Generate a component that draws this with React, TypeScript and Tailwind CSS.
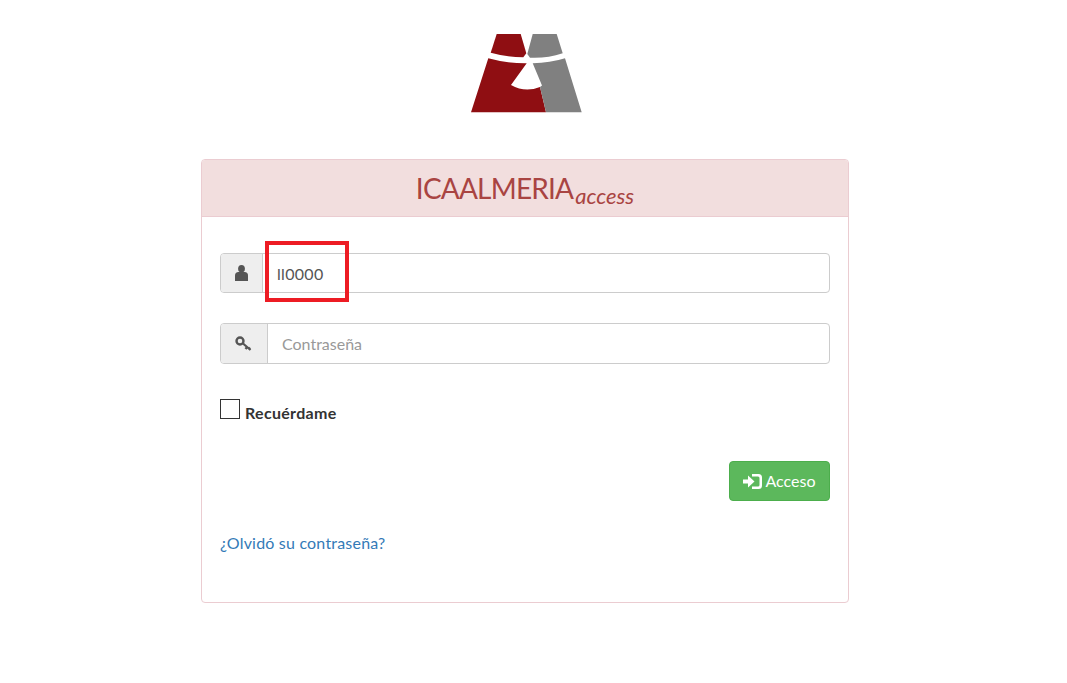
export default function App() {
  return (
    <div className="min-h-screen bg-white font-['Lato','Noto_Sans',sans-serif]">
      <div className="w-[1050px] relative">
        <div className="pt-[28px] pl-[465px]">
          <svg className="block w-[125px] h-[90px]" viewBox="465 28 125 90">
            <path d="M496.7 34H520.7L526.3 53.3L523.3 57.3Q506 57 490.7 52.7Z" fill="#8f0e12" />
            <path d="M532.7 34H556.7L562.7 53.3Q547 58.5 530 57.7L527.3 54Z" fill="#808080" />
            <path d="M488.3 58.3Q507 63.5 526.7 63.3L511 85Q525 93 540 87L546 112.3H471Z" fill="#8f0e12" />
            <path d="M565 58.3L581.7 112.3H546L540 87L542 85.5L532.7 63.3Q550 63 565 58.3Z" fill="#808080" />
          </svg>
        </div>

        <div className="ml-[201px] mt-[41px] w-[648px] h-[444px] border border-[#ebccd1] rounded-[4px] flex flex-col overflow-hidden">
          <div className="h-[57px] bg-[#f2dede] border-b border-[#ebccd1] flex items-center justify-center text-[#a94442]">
            <span className="text-[28px] leading-none tracking-[-0.8px]">ICAALMERIA</span>
            <span className="text-[22px] italic leading-none mt-[16px] ml-[2px]">access</span>
          </div>

          <div className="px-[18px] pt-[36px] flex flex-col">
            <div className="flex h-[40px] border border-[#ccc] rounded-[4px] overflow-hidden">
              <div className="w-[42px] bg-[#eee] border-r border-[#ccc] flex items-center justify-center">
                <svg className="w-[13px] h-[16px]" viewBox="0 0 13 16" fill="#555">
                  <ellipse cx="6.5" cy="3.8" rx="3.4" ry="3.8" />
                  <path d="M0 16V10.5Q0 7.2 3.5 7H9.5Q13 7.2 13 10.5V16Z" />
                </svg>
              </div>
              <div className="flex-1 flex items-center pl-[14px] pt-[1px] text-[16px] tracking-[0.3px] text-[#555]">ll0000</div>
            </div>

            <div className="flex h-[41px] mt-[30px] border border-[#ccc] rounded-[4px] overflow-hidden">
              <div className="w-[47px] bg-[#eee] border-r border-[#ccc] flex items-center justify-center">
                <svg className="w-[17px] h-[15px] mr-[2px]" viewBox="0 0 17 15" fill="none" stroke="#555">
                  <circle cx="5" cy="5" r="3.5" strokeWidth="2.4" />
                  <path d="M8 7.5L15.5 14M12 11L10.5 13M15 11.5L13.5 13.5" strokeWidth="2.3" />
                </svg>
              </div>
              <div className="flex-1 flex items-center pl-[14px] text-[16px] text-[#999]">Contraseña</div>
            </div>

            <div className="flex items-start mt-[35px]">
              <div className="w-[20px] h-[20px] border border-[#333]" />
              <span className="ml-[5px] mt-[3px] text-[16px] leading-[22px] font-bold tracking-[0.3px] text-[#333]">Recuérdame</span>
            </div>

            <div className="flex justify-end mt-[37px]">
              <button className="w-[101px] h-[40px] bg-[#5cb85c] border border-[#4cae4c] rounded-[4px] flex items-center justify-center text-white text-[16px]">
                <svg className="w-[19px] h-[15px] mr-[3px]" viewBox="0 0 19 15" fill="#fff">
                  <path d="M0 5.5H5V1.5L11.5 7.5L5 13.5V9.5H0Z" />
                  <path d="M9 0H15.5Q19 0 19 3.5V11.5Q19 15 15.5 15H9V12.6H15Q16.5 12.6 16.5 11V4Q16.5 2.4 15 2.4H9Z" />
                </svg>
                Acceso
              </button>
            </div>

            <a className="mt-[31px] text-[16px] leading-[22px] tracking-[0.2px] text-[#337ab7]">¿Olvidó su contraseña?</a>
          </div>
        </div>

        <div className="absolute left-[265px] top-[241px] w-[84px] h-[61px] border-4 border-[#ed1c24]" />
      </div>
    </div>
  )
}
